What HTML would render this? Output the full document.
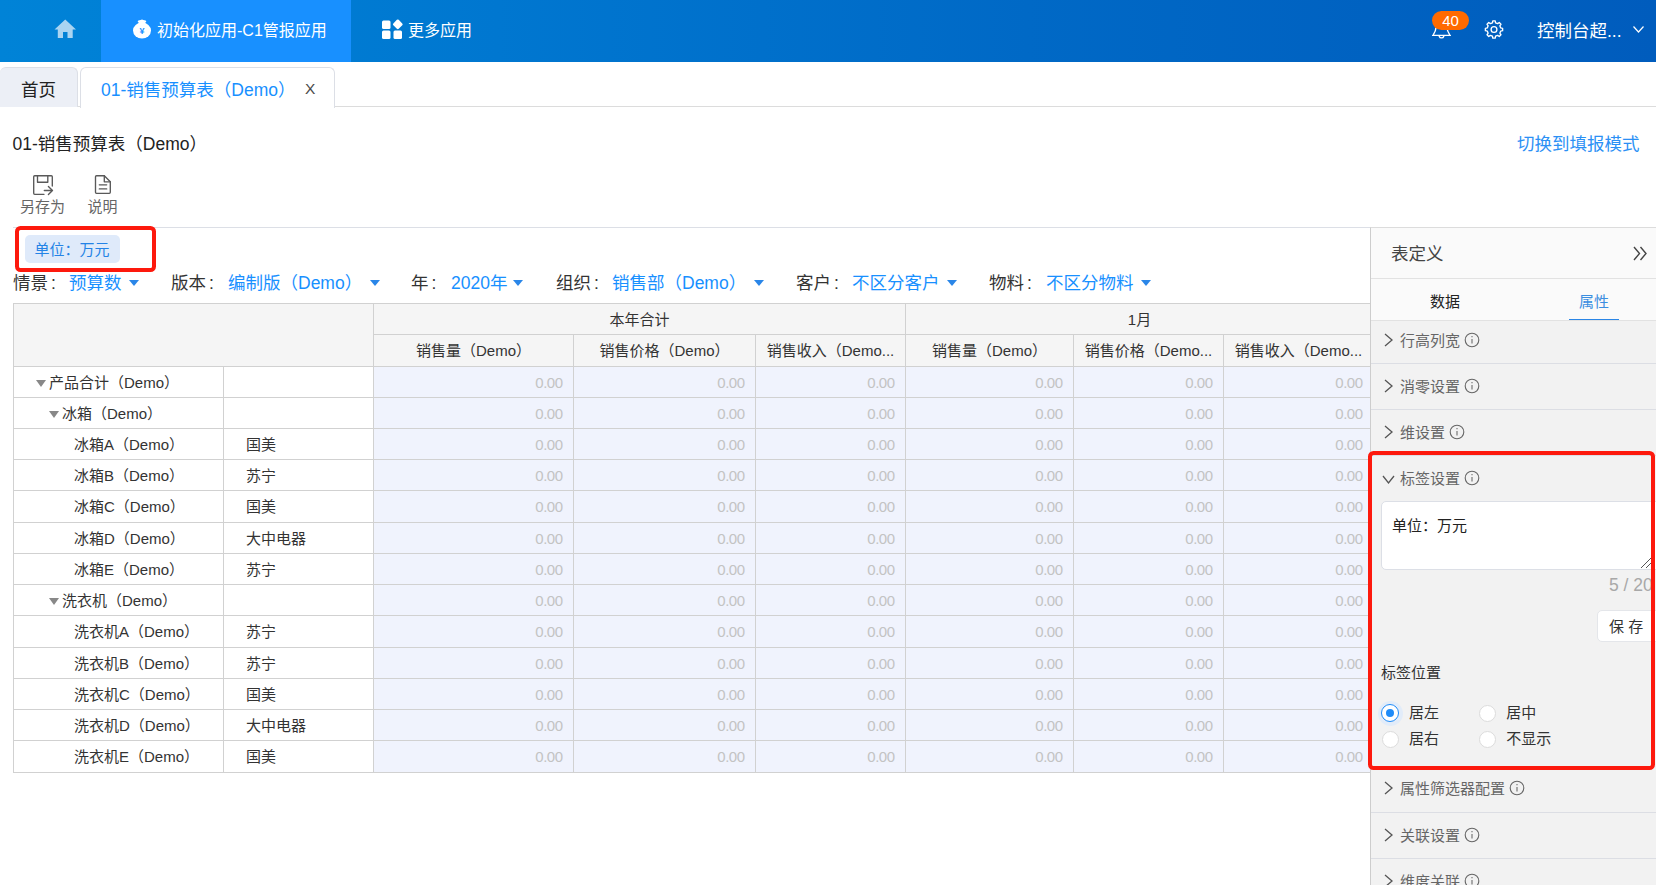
<!DOCTYPE html>
<html lang="zh-CN">
<head>
<meta charset="utf-8">
<title>01-销售预算表（Demo）</title>
<style>
*{box-sizing:border-box;margin:0;padding:0}
html,body{width:1656px;height:885px;overflow:hidden;background:#fff}
body{font-family:"Liberation Sans","Noto Sans CJK SC",sans-serif;color:#333;position:relative;font-size:14px}
.abs{position:absolute;white-space:nowrap}
svg{position:absolute;overflow:visible}
/* top bar */
#top{position:absolute;left:0;top:0;width:1656px;height:62px;background:linear-gradient(90deg,#0083d7 0%,#0077d0 30%,#0069c6 62%,#005cbd 100%)}
#top .act{position:absolute;left:101px;top:0;width:250px;height:62px;background:#1890ff}
#top .t{position:absolute;color:#fff;font-size:16px;line-height:20px;white-space:nowrap}
/* tabs */
#tabs{position:absolute;left:0;top:62px;width:1656px;height:45px;border-bottom:1px solid #dcdcdc;background:#fff}
.tab{position:absolute;top:5px;height:40px;border:1px solid #dcdfe6;border-bottom:none;border-radius:6px 6px 0 0;font-size:17.5px;line-height:44px;white-space:nowrap}
/* main */
#main{position:absolute;left:0;top:107px;width:1656px;height:196px}
.fl{position:absolute;top:164px;font-size:17.5px;line-height:24px;white-space:nowrap;color:#333}
.fl b{font-weight:normal;color:#1890ff}
.fl i{font-style:normal;margin-left:3px}
.tri{position:absolute;width:0;height:0;border-left:5.3px solid transparent;border-right:5.3px solid transparent;border-top:6.8px solid #2a86e8}
/* table */
#grid{position:absolute;left:13px;top:303px;width:1357px;height:470px;overflow:hidden;border-left:1px solid #d1d1d1;border-top:1px solid #d1d1d1}
#grid .c{position:absolute;border-right:1px solid #d1d1d1;border-bottom:1px solid #d1d1d1;font-size:15px;white-space:nowrap;overflow:hidden;color:#333;background:#fff}
#grid .h{background:#f5f5f5;text-align:center}
#grid .n{background:#f0f3fd;text-align:right;color:#c3c3c3;padding-right:10.5px;letter-spacing:-0.5px}
#grid .gt{position:absolute;width:0;height:0;border-left:5px solid transparent;border-right:5px solid transparent;border-top:7px solid #888}
/* panel */
#panel{position:absolute;left:1370px;top:227px;width:286px;height:658px;background:#f2f2f2;border-left:1px solid #cdcdcd;border-top:1px solid #dcdcdc;overflow:hidden}
.sec{position:absolute;left:0;width:286px;height:46px;border-bottom:1px solid #dedede;font-size:15px;color:#666;line-height:20px;white-space:nowrap}
.sec span{position:absolute;left:29px;top:12px}
.rad{position:absolute;width:18px;height:18px;border-radius:50%;background:#fff;border:1px solid #e2e2e2}
.rl{position:absolute;font-size:15px;color:#333;line-height:20px;white-space:nowrap}
</style>
</head>

<body>
<div id="top">
  <div class="act"></div>
  <svg style="left:54px;top:19px" width="22.5" height="20" viewBox="0 0 22 20" preserveAspectRatio="none"><path d="M11 0.5 L21.5 10.5 L18.3 10.5 L18.3 19 L13.2 19 L13.2 13 L8.8 13 L8.8 19 L3.7 19 L3.7 10.5 L0.5 10.5 Z" fill="#a9d4f1"/></svg>
  <svg style="left:132px;top:19px" width="20" height="20" viewBox="0 0 20 20"><path d="M5.6 2.2 C6.6 0.6 8 1.6 10 0.5 C12 1.6 13.4 0.6 14.4 2.2 L12.8 4.6 L7.2 4.6 Z" fill="#fff"/><ellipse cx="10" cy="11.6" rx="9" ry="8" fill="#fff"/><text x="10" y="15.2" font-size="9" font-weight="bold" text-anchor="middle" fill="#1890ff" font-family="Liberation Sans, sans-serif">¥</text></svg>
  <div class="t" style="left:157px;top:21px">初始化应用-C1管报应用</div>
  <svg style="left:382px;top:19px" width="21" height="20" viewBox="0 0 21 20"><rect x="0" y="1.5" width="8.5" height="8.5" rx="1.5" fill="#fff"/><rect x="0" y="11.5" width="8.5" height="8.5" rx="1.5" fill="#fff"/><rect x="11.5" y="11.5" width="8.5" height="8.5" rx="1.5" fill="#fff"/><rect x="12" y="1.5" width="7.6" height="7.6" rx="1.3" fill="#fff" transform="rotate(45 15.8 5.3)"/></svg>
  <div class="t" style="left:408px;top:21px">更多应用</div>
  <svg style="left:0;top:0" width="1656" height="62" viewBox="0 0 1656 62"><path d="M1432.6 35.4 L1450.4 35.4 M1433 35.4 C1436.2 31 1436.2 27 1436.4 25.5 C1436.8 22 1439 20.2 1441.5 20.2 C1444 20.2 1446.2 22 1446.6 25.5 C1446.8 27 1446.8 31 1450 35.4 M1439.2 36.2 A2.4 2.4 0 0 0 1443.8 36.2" fill="none" stroke="#fff" stroke-width="1.35" stroke-linecap="round" stroke-linejoin="round"/></svg>
  <div class="abs" style="left:1432px;top:11px;width:37px;height:19px;border-radius:10px;background:#ff6a00;color:#fff;font-size:15px;line-height:19px;text-align:center">40</div>
  <svg style="left:1484px;top:19px" width="20" height="21" viewBox="0 0 20 21"><g fill="none" stroke="#fff" stroke-width="1.35" stroke-linejoin="round"><circle cx="10" cy="10.5" r="2.9"/><path d="M8.45 3.78 L8.79 1.88 L11.21 1.88 L11.55 3.78 L13.66 4.65 L15.24 3.55 L16.95 5.26 L15.85 6.84 L16.72 8.95 L18.62 9.29 L18.62 11.71 L16.72 12.05 L15.85 14.16 L16.95 15.74 L15.24 17.45 L13.66 16.35 L11.55 17.22 L11.21 19.12 L8.79 19.12 L8.45 17.22 L6.34 16.35 L4.76 17.45 L3.05 15.74 L4.15 14.16 L3.28 12.05 L1.38 11.71 L1.38 9.29 L3.28 8.95 L4.15 6.84 L3.05 5.26 L4.76 3.55 L6.34 4.65 Z"/></g></svg>
  <div class="t" style="left:1537px;top:20px;font-size:17.5px;line-height:22px">控制台超...</div>
  <svg style="left:1633px;top:26px" width="11" height="7" viewBox="0 0 11 7"><path d="M0.5 0.5 L5.5 6 L10.5 0.5" fill="none" stroke="#fff" stroke-width="1.2"/></svg>
</div>

<div id="tabs">
  <div class="tab" style="left:0;width:78px;background:#eceff6;color:#222;border-left:none;padding-left:21px">首页</div>
  <div class="tab" style="left:80px;width:255px;background:#fff;color:#1890ff;padding-left:20px;height:41px">01-销售预算表（Demo）</div>
  <div class="abs" style="left:305px;top:17px;font-size:15.5px;line-height:20px;color:#4a4a4a">X</div>
</div>

<div id="main">
  <div class="abs" style="left:12.5px;top:25px;font-size:17.5px;line-height:24px;color:#222">01-销售预算表（Demo）</div>
  <div class="abs" style="left:1517px;top:25px;font-size:17.5px;line-height:24px;color:#2b90f5">切换到填报模式</div>
  <svg style="left:0;top:0" width="130" height="100" viewBox="0 107 130 100"><g fill="none" stroke="#595959" stroke-width="1.35" stroke-linejoin="round" stroke-linecap="round"><path d="M44 194.3 L34.7 194.3 Q33.7 194.3 33.7 193.3 L33.7 176.7 Q33.7 175.7 34.7 175.7 L51.3 175.7 Q52.3 175.7 52.3 176.7 L52.3 186"/><path d="M37.5 175.7 L37.5 182.2 L47.8 182.2 L47.8 175.7"/><path d="M44.3 190.5 L52.5 190.5 M48.4 186.4 L52.5 190.5 L48.4 194.6"/><path d="M96.5 175.7 L104.3 175.7 L110.3 181.8 L110.3 192.3 Q110.3 193.3 109.3 193.3 L96.5 193.3 Q95.5 193.3 95.5 192.3 L95.5 176.7 Q95.5 175.7 96.5 175.7 Z"/><path d="M104.3 175.7 L104.3 181.8 L110.3 181.8"/><path d="M99.3 184.8 L106.7 184.8 M99.3 188.9 L106.7 188.9"/></g></svg>
  <div class="abs" style="left:20px;top:90px;font-size:15px;line-height:20px;color:#666">另存为</div>
  
  <div class="abs" style="left:87.5px;top:90px;font-size:15px;line-height:20px;color:#666">说明</div>
  <div class="abs" style="left:13px;top:120px;width:1643px;height:1px;background:#dcdfe6"></div>
  <div class="abs" style="left:25px;top:128px;width:95px;height:28px;border-radius:5px;background:#dfeafa;color:#2483e6;font-size:15px;line-height:30px;padding-left:9.5px">单位：万元</div>
  <div class="abs" style="left:15px;top:119px;width:141px;height:45.5px;border:4.4px solid #fd190d;border-radius:5.5px"></div>

  <div class="fl" style="left:13px">情景<i>:</i></div><div class="fl" style="left:69px"><b>预算数</b></div><div class="tri" style="left:129px;top:172.5px"></div>
  <div class="fl" style="left:171px">版本<i>:</i></div><div class="fl" style="left:228px"><b>编制版（Demo）</b></div><div class="tri" style="left:370px;top:172.5px"></div>
  <div class="fl" style="left:411px">年<i>:</i></div><div class="fl" style="left:451px"><b>2020年</b></div><div class="tri" style="left:513px;top:172.5px"></div>
  <div class="fl" style="left:556px">组织<i>:</i></div><div class="fl" style="left:612px"><b>销售部（Demo）</b></div><div class="tri" style="left:754px;top:172.5px"></div>
  <div class="fl" style="left:796px">客户<i>:</i></div><div class="fl" style="left:852px"><b>不区分客户</b></div><div class="tri" style="left:947px;top:172.5px"></div>
  <div class="fl" style="left:989px">物料<i>:</i></div><div class="fl" style="left:1046px"><b>不区分物料</b></div><div class="tri" style="left:1141px;top:172.5px"></div>
</div>

<div id="grid">
<div class="c h" style="left:0px;top:0px;width:360px;height:63px;line-height:63px;"></div>
<div class="c h" style="left:360px;top:0px;width:532px;height:31px;line-height:31px;">本年合计</div>
<div class="c h" style="left:892px;top:0px;width:468px;height:31px;line-height:31px;">1月</div>
<div class="c h" style="left:360px;top:31px;width:200px;height:32px;line-height:32px;">销售量（Demo）</div>
<div class="c h" style="left:560px;top:31px;width:182px;height:32px;line-height:32px;">销售价格（Demo）</div>
<div class="c h" style="left:742px;top:31px;width:150px;height:32px;line-height:32px;">销售收入（Demo...</div>
<div class="c h" style="left:892px;top:31px;width:168px;height:32px;line-height:32px;">销售量（Demo）</div>
<div class="c h" style="left:1060px;top:31px;width:150px;height:32px;line-height:32px;">销售价格（Demo...</div>
<div class="c h" style="left:1210px;top:31px;width:150px;height:32px;line-height:32px;">销售收入（Demo...</div>
<div class="c l" style="left:0px;top:63px;width:210px;height:31px;line-height:31px;padding-left:35px">产品合计（Demo）</div>
<div class="gt" style="left:22px;top:76px"></div>
<div class="c l" style="left:210px;top:63px;width:150px;height:31px;line-height:31px;padding-left:22px"></div>
<div class="c n" style="left:360px;top:63px;width:200px;height:31px;line-height:31px;">0.00</div>
<div class="c n" style="left:560px;top:63px;width:182px;height:31px;line-height:31px;">0.00</div>
<div class="c n" style="left:742px;top:63px;width:150px;height:31px;line-height:31px;">0.00</div>
<div class="c n" style="left:892px;top:63px;width:168px;height:31px;line-height:31px;">0.00</div>
<div class="c n" style="left:1060px;top:63px;width:150px;height:31px;line-height:31px;">0.00</div>
<div class="c n" style="left:1210px;top:63px;width:150px;height:31px;line-height:31px;">0.00</div>
<div class="c l" style="left:0px;top:94px;width:210px;height:31px;line-height:31px;padding-left:48px">冰箱（Demo）</div>
<div class="gt" style="left:35px;top:107px"></div>
<div class="c l" style="left:210px;top:94px;width:150px;height:31px;line-height:31px;padding-left:22px"></div>
<div class="c n" style="left:360px;top:94px;width:200px;height:31px;line-height:31px;">0.00</div>
<div class="c n" style="left:560px;top:94px;width:182px;height:31px;line-height:31px;">0.00</div>
<div class="c n" style="left:742px;top:94px;width:150px;height:31px;line-height:31px;">0.00</div>
<div class="c n" style="left:892px;top:94px;width:168px;height:31px;line-height:31px;">0.00</div>
<div class="c n" style="left:1060px;top:94px;width:150px;height:31px;line-height:31px;">0.00</div>
<div class="c n" style="left:1210px;top:94px;width:150px;height:31px;line-height:31px;">0.00</div>
<div class="c l" style="left:0px;top:125px;width:210px;height:31px;line-height:31px;padding-left:60px">冰箱A（Demo）</div>
<div class="c l" style="left:210px;top:125px;width:150px;height:31px;line-height:31px;padding-left:22px">国美</div>
<div class="c n" style="left:360px;top:125px;width:200px;height:31px;line-height:31px;">0.00</div>
<div class="c n" style="left:560px;top:125px;width:182px;height:31px;line-height:31px;">0.00</div>
<div class="c n" style="left:742px;top:125px;width:150px;height:31px;line-height:31px;">0.00</div>
<div class="c n" style="left:892px;top:125px;width:168px;height:31px;line-height:31px;">0.00</div>
<div class="c n" style="left:1060px;top:125px;width:150px;height:31px;line-height:31px;">0.00</div>
<div class="c n" style="left:1210px;top:125px;width:150px;height:31px;line-height:31px;">0.00</div>
<div class="c l" style="left:0px;top:156px;width:210px;height:31px;line-height:31px;padding-left:60px">冰箱B（Demo）</div>
<div class="c l" style="left:210px;top:156px;width:150px;height:31px;line-height:31px;padding-left:22px">苏宁</div>
<div class="c n" style="left:360px;top:156px;width:200px;height:31px;line-height:31px;">0.00</div>
<div class="c n" style="left:560px;top:156px;width:182px;height:31px;line-height:31px;">0.00</div>
<div class="c n" style="left:742px;top:156px;width:150px;height:31px;line-height:31px;">0.00</div>
<div class="c n" style="left:892px;top:156px;width:168px;height:31px;line-height:31px;">0.00</div>
<div class="c n" style="left:1060px;top:156px;width:150px;height:31px;line-height:31px;">0.00</div>
<div class="c n" style="left:1210px;top:156px;width:150px;height:31px;line-height:31px;">0.00</div>
<div class="c l" style="left:0px;top:187px;width:210px;height:32px;line-height:32px;padding-left:60px">冰箱C（Demo）</div>
<div class="c l" style="left:210px;top:187px;width:150px;height:32px;line-height:32px;padding-left:22px">国美</div>
<div class="c n" style="left:360px;top:187px;width:200px;height:32px;line-height:32px;">0.00</div>
<div class="c n" style="left:560px;top:187px;width:182px;height:32px;line-height:32px;">0.00</div>
<div class="c n" style="left:742px;top:187px;width:150px;height:32px;line-height:32px;">0.00</div>
<div class="c n" style="left:892px;top:187px;width:168px;height:32px;line-height:32px;">0.00</div>
<div class="c n" style="left:1060px;top:187px;width:150px;height:32px;line-height:32px;">0.00</div>
<div class="c n" style="left:1210px;top:187px;width:150px;height:32px;line-height:32px;">0.00</div>
<div class="c l" style="left:0px;top:219px;width:210px;height:31px;line-height:31px;padding-left:60px">冰箱D（Demo）</div>
<div class="c l" style="left:210px;top:219px;width:150px;height:31px;line-height:31px;padding-left:22px">大中电器</div>
<div class="c n" style="left:360px;top:219px;width:200px;height:31px;line-height:31px;">0.00</div>
<div class="c n" style="left:560px;top:219px;width:182px;height:31px;line-height:31px;">0.00</div>
<div class="c n" style="left:742px;top:219px;width:150px;height:31px;line-height:31px;">0.00</div>
<div class="c n" style="left:892px;top:219px;width:168px;height:31px;line-height:31px;">0.00</div>
<div class="c n" style="left:1060px;top:219px;width:150px;height:31px;line-height:31px;">0.00</div>
<div class="c n" style="left:1210px;top:219px;width:150px;height:31px;line-height:31px;">0.00</div>
<div class="c l" style="left:0px;top:250px;width:210px;height:31px;line-height:31px;padding-left:60px">冰箱E（Demo）</div>
<div class="c l" style="left:210px;top:250px;width:150px;height:31px;line-height:31px;padding-left:22px">苏宁</div>
<div class="c n" style="left:360px;top:250px;width:200px;height:31px;line-height:31px;">0.00</div>
<div class="c n" style="left:560px;top:250px;width:182px;height:31px;line-height:31px;">0.00</div>
<div class="c n" style="left:742px;top:250px;width:150px;height:31px;line-height:31px;">0.00</div>
<div class="c n" style="left:892px;top:250px;width:168px;height:31px;line-height:31px;">0.00</div>
<div class="c n" style="left:1060px;top:250px;width:150px;height:31px;line-height:31px;">0.00</div>
<div class="c n" style="left:1210px;top:250px;width:150px;height:31px;line-height:31px;">0.00</div>
<div class="c l" style="left:0px;top:281px;width:210px;height:31px;line-height:31px;padding-left:48px">洗衣机（Demo）</div>
<div class="gt" style="left:35px;top:294px"></div>
<div class="c l" style="left:210px;top:281px;width:150px;height:31px;line-height:31px;padding-left:22px"></div>
<div class="c n" style="left:360px;top:281px;width:200px;height:31px;line-height:31px;">0.00</div>
<div class="c n" style="left:560px;top:281px;width:182px;height:31px;line-height:31px;">0.00</div>
<div class="c n" style="left:742px;top:281px;width:150px;height:31px;line-height:31px;">0.00</div>
<div class="c n" style="left:892px;top:281px;width:168px;height:31px;line-height:31px;">0.00</div>
<div class="c n" style="left:1060px;top:281px;width:150px;height:31px;line-height:31px;">0.00</div>
<div class="c n" style="left:1210px;top:281px;width:150px;height:31px;line-height:31px;">0.00</div>
<div class="c l" style="left:0px;top:312px;width:210px;height:32px;line-height:32px;padding-left:60px">洗衣机A（Demo）</div>
<div class="c l" style="left:210px;top:312px;width:150px;height:32px;line-height:32px;padding-left:22px">苏宁</div>
<div class="c n" style="left:360px;top:312px;width:200px;height:32px;line-height:32px;">0.00</div>
<div class="c n" style="left:560px;top:312px;width:182px;height:32px;line-height:32px;">0.00</div>
<div class="c n" style="left:742px;top:312px;width:150px;height:32px;line-height:32px;">0.00</div>
<div class="c n" style="left:892px;top:312px;width:168px;height:32px;line-height:32px;">0.00</div>
<div class="c n" style="left:1060px;top:312px;width:150px;height:32px;line-height:32px;">0.00</div>
<div class="c n" style="left:1210px;top:312px;width:150px;height:32px;line-height:32px;">0.00</div>
<div class="c l" style="left:0px;top:344px;width:210px;height:31px;line-height:31px;padding-left:60px">洗衣机B（Demo）</div>
<div class="c l" style="left:210px;top:344px;width:150px;height:31px;line-height:31px;padding-left:22px">苏宁</div>
<div class="c n" style="left:360px;top:344px;width:200px;height:31px;line-height:31px;">0.00</div>
<div class="c n" style="left:560px;top:344px;width:182px;height:31px;line-height:31px;">0.00</div>
<div class="c n" style="left:742px;top:344px;width:150px;height:31px;line-height:31px;">0.00</div>
<div class="c n" style="left:892px;top:344px;width:168px;height:31px;line-height:31px;">0.00</div>
<div class="c n" style="left:1060px;top:344px;width:150px;height:31px;line-height:31px;">0.00</div>
<div class="c n" style="left:1210px;top:344px;width:150px;height:31px;line-height:31px;">0.00</div>
<div class="c l" style="left:0px;top:375px;width:210px;height:31px;line-height:31px;padding-left:60px">洗衣机C（Demo）</div>
<div class="c l" style="left:210px;top:375px;width:150px;height:31px;line-height:31px;padding-left:22px">国美</div>
<div class="c n" style="left:360px;top:375px;width:200px;height:31px;line-height:31px;">0.00</div>
<div class="c n" style="left:560px;top:375px;width:182px;height:31px;line-height:31px;">0.00</div>
<div class="c n" style="left:742px;top:375px;width:150px;height:31px;line-height:31px;">0.00</div>
<div class="c n" style="left:892px;top:375px;width:168px;height:31px;line-height:31px;">0.00</div>
<div class="c n" style="left:1060px;top:375px;width:150px;height:31px;line-height:31px;">0.00</div>
<div class="c n" style="left:1210px;top:375px;width:150px;height:31px;line-height:31px;">0.00</div>
<div class="c l" style="left:0px;top:406px;width:210px;height:31px;line-height:31px;padding-left:60px">洗衣机D（Demo）</div>
<div class="c l" style="left:210px;top:406px;width:150px;height:31px;line-height:31px;padding-left:22px">大中电器</div>
<div class="c n" style="left:360px;top:406px;width:200px;height:31px;line-height:31px;">0.00</div>
<div class="c n" style="left:560px;top:406px;width:182px;height:31px;line-height:31px;">0.00</div>
<div class="c n" style="left:742px;top:406px;width:150px;height:31px;line-height:31px;">0.00</div>
<div class="c n" style="left:892px;top:406px;width:168px;height:31px;line-height:31px;">0.00</div>
<div class="c n" style="left:1060px;top:406px;width:150px;height:31px;line-height:31px;">0.00</div>
<div class="c n" style="left:1210px;top:406px;width:150px;height:31px;line-height:31px;">0.00</div>
<div class="c l" style="left:0px;top:437px;width:210px;height:32px;line-height:32px;padding-left:60px">洗衣机E（Demo）</div>
<div class="c l" style="left:210px;top:437px;width:150px;height:32px;line-height:32px;padding-left:22px">国美</div>
<div class="c n" style="left:360px;top:437px;width:200px;height:32px;line-height:32px;">0.00</div>
<div class="c n" style="left:560px;top:437px;width:182px;height:32px;line-height:32px;">0.00</div>
<div class="c n" style="left:742px;top:437px;width:150px;height:32px;line-height:32px;">0.00</div>
<div class="c n" style="left:892px;top:437px;width:168px;height:32px;line-height:32px;">0.00</div>
<div class="c n" style="left:1060px;top:437px;width:150px;height:32px;line-height:32px;">0.00</div>
<div class="c n" style="left:1210px;top:437px;width:150px;height:32px;line-height:32px;">0.00</div>
</div>
<div id="panel">
<div class="abs" style="left:0px;top:0px;width:285px;height:51px;background:#fafafa;border-bottom:1px solid #e2e2e2"></div>
<div class="abs" style="left:20px;top:14px;font-size:17.5px;line-height:24px;color:#444">表定义</div>
<svg style="left:262px;top:18px" width="14" height="15" viewBox="0 0 14 15"><path d="M1 1 L6.5 7.5 L1 14 M7.5 1 L13 7.5 L7.5 14" fill="none" stroke="#444" stroke-width="1.4"/></svg>
<div class="abs" style="left:0px;top:51px;width:285px;height:42px;background:#fafafa;border-bottom:1px solid #e2e2e2"></div>
<div class="abs" style="left:59px;top:64px;font-size:15px;line-height:20px;color:#222">数据</div>
<div class="abs" style="left:208px;top:64px;font-size:15px;line-height:20px;color:#3b8ee0">属性</div>
<div class="abs" style="left:198px;top:91px;width:50px;height:1px;background:#2b86e6"></div>
<svg style="left:13.299999999999955px;top:105px" width="9" height="14" viewBox="0 0 9 14"><path d="M1 1 L8 7 L1 13" fill="none" stroke="#555" stroke-width="1.3"/></svg>
<div class="abs" style="left:29px;top:102.5px;font-size:15px;line-height:20px;color:#666">行高列宽</div>
<svg style="left:92.5px;top:103.69999999999999px" width="16" height="16" viewBox="0 0 16 16"><circle cx="8" cy="8" r="6.8" fill="none" stroke="#666" stroke-width="1.1"/><path d="M8 6.9 L8 11.6 M8 4.1 L8 5.3" stroke="#666" stroke-width="1.05" fill="none"/></svg>
<div class="abs" style="left:0px;top:135px;width:285px;height:1px;background:#dcdee4"></div>
<svg style="left:13.299999999999955px;top:151px" width="9" height="14" viewBox="0 0 9 14"><path d="M1 1 L8 7 L1 13" fill="none" stroke="#555" stroke-width="1.3"/></svg>
<div class="abs" style="left:29px;top:148.5px;font-size:15px;line-height:20px;color:#666">消零设置</div>
<svg style="left:92.5px;top:149.7px" width="16" height="16" viewBox="0 0 16 16"><circle cx="8" cy="8" r="6.8" fill="none" stroke="#666" stroke-width="1.1"/><path d="M8 6.9 L8 11.6 M8 4.1 L8 5.3" stroke="#666" stroke-width="1.05" fill="none"/></svg>
<div class="abs" style="left:0px;top:181px;width:285px;height:1px;background:#dcdee4"></div>
<svg style="left:13.299999999999955px;top:197px" width="9" height="14" viewBox="0 0 9 14"><path d="M1 1 L8 7 L1 13" fill="none" stroke="#555" stroke-width="1.3"/></svg>
<div class="abs" style="left:29px;top:194.5px;font-size:15px;line-height:20px;color:#666">维设置</div>
<svg style="left:77.5px;top:195.7px" width="16" height="16" viewBox="0 0 16 16"><circle cx="8" cy="8" r="6.8" fill="none" stroke="#666" stroke-width="1.1"/><path d="M8 6.9 L8 11.6 M8 4.1 L8 5.3" stroke="#666" stroke-width="1.05" fill="none"/></svg>
<div class="abs" style="left:0px;top:227px;width:285px;height:1px;background:#dcdee4"></div>
<svg style="left:10.5px;top:247px" width="13" height="9" viewBox="0 0 13 9"><path d="M1 1 L6.5 8 L12 1" fill="none" stroke="#555" stroke-width="1.3"/></svg>
<div class="abs" style="left:29px;top:240.5px;font-size:15px;line-height:20px;color:#666">标签设置</div>
<svg style="left:92.5px;top:241.7px" width="16" height="16" viewBox="0 0 16 16"><circle cx="8" cy="8" r="6.8" fill="none" stroke="#666" stroke-width="1.1"/><path d="M8 6.9 L8 11.6 M8 4.1 L8 5.3" stroke="#666" stroke-width="1.05" fill="none"/></svg>
<div class="abs" style="left:10px;top:273px;width:290px;height:69px;background:#fff;border:1px solid #dcdfe6;border-radius:5px"></div>
<div class="abs" style="left:21px;top:287.5px;font-size:15px;line-height:20px;color:#222">单位：万元</div>
<svg style="left:269px;top:329px" width="12" height="12" viewBox="0 0 12 12"><path d="M1 11 L11 1 M6 11 L11 6" stroke="#555" stroke-width="1" fill="none"/></svg>
<div class="abs" style="left:238px;top:345px;font-size:17.5px;line-height:24px;color:#a8a8a8">5 / 20</div>
<div class="abs" style="left:226px;top:382px;width:80px;height:32px;background:#fff;border:1px solid #e4e6ea;border-radius:5px"></div>
<div class="abs" style="left:238px;top:389px;font-size:15px;line-height:20px;color:#333;letter-spacing:0">保 存</div>
<div class="abs" style="left:10px;top:435px;font-size:15px;line-height:20px;color:#333">标签位置</div>
<div class="abs" style="left:6.599999999999909px;top:472.70000000000005px;width:25px;height:25px;border-radius:50%;background:#e2ecf9"></div>
<div class="abs" style="left:10.099999999999909px;top:476.20000000000005px;width:18px;height:18px;border-radius:50%;background:#fff;border:1.3px solid #1e8bf8"></div>
<div class="abs" style="left:14.799999999999955px;top:480.9000000000001px;width:8.6px;height:8.6px;border-radius:50%;background:#1e8bf8"></div>
<div class="abs" style="left:38px;top:474.70000000000005px;font-size:15px;line-height:20px;color:#333">居左</div>
<div class="abs" style="left:108.09999999999991px;top:476.79999999999995px;width:17px;height:17px;border-radius:50%;background:#fff;border:1px solid #dcdcdc"></div>
<div class="abs" style="left:135.29999999999995px;top:474.79999999999995px;font-size:15px;line-height:20px;color:#333">居中</div>
<div class="abs" style="left:10.5px;top:502.9px;width:17px;height:17px;border-radius:50%;background:#fff;border:1px solid #dcdcdc"></div>
<div class="abs" style="left:38px;top:500.9px;font-size:15px;line-height:20px;color:#333">居右</div>
<div class="abs" style="left:108.09999999999991px;top:502.9px;width:17px;height:17px;border-radius:50%;background:#fff;border:1px solid #dcdcdc"></div>
<div class="abs" style="left:135.29999999999995px;top:500.9px;font-size:15px;line-height:20px;color:#333">不显示</div>
<svg style="left:13.299999999999955px;top:553px" width="9" height="14" viewBox="0 0 9 14"><path d="M1 1 L8 7 L1 13" fill="none" stroke="#555" stroke-width="1.3"/></svg>
<div class="abs" style="left:29px;top:550.5px;font-size:15px;line-height:20px;color:#666">属性筛选器配置</div>
<svg style="left:137.5px;top:551.7px" width="16" height="16" viewBox="0 0 16 16"><circle cx="8" cy="8" r="6.8" fill="none" stroke="#666" stroke-width="1.1"/><path d="M8 6.9 L8 11.6 M8 4.1 L8 5.3" stroke="#666" stroke-width="1.05" fill="none"/></svg>
<div class="abs" style="left:0px;top:584px;width:285px;height:1px;background:#dcdee4"></div>
<svg style="left:13.299999999999955px;top:600px" width="9" height="14" viewBox="0 0 9 14"><path d="M1 1 L8 7 L1 13" fill="none" stroke="#555" stroke-width="1.3"/></svg>
<div class="abs" style="left:29px;top:597.5px;font-size:15px;line-height:20px;color:#666">关联设置</div>
<svg style="left:92.5px;top:598.7px" width="16" height="16" viewBox="0 0 16 16"><circle cx="8" cy="8" r="6.8" fill="none" stroke="#666" stroke-width="1.1"/><path d="M8 6.9 L8 11.6 M8 4.1 L8 5.3" stroke="#666" stroke-width="1.05" fill="none"/></svg>
<div class="abs" style="left:0px;top:630px;width:285px;height:1px;background:#dcdee4"></div>
<svg style="left:13.299999999999955px;top:646px" width="9" height="14" viewBox="0 0 9 14"><path d="M1 1 L8 7 L1 13" fill="none" stroke="#555" stroke-width="1.3"/></svg>
<div class="abs" style="left:29px;top:643.5px;font-size:15px;line-height:20px;color:#666">维度关联</div>
<svg style="left:92.5px;top:644.7px" width="16" height="16" viewBox="0 0 16 16"><circle cx="8" cy="8" r="6.8" fill="none" stroke="#666" stroke-width="1.1"/><path d="M8 6.9 L8 11.6 M8 4.1 L8 5.3" stroke="#666" stroke-width="1.05" fill="none"/></svg>
</div>
<div class="abs" style="left:1368px;top:451px;width:287px;height:318.5px;border:4.4px solid #fd190d;border-radius:5.5px"></div>
</body>
</html>
